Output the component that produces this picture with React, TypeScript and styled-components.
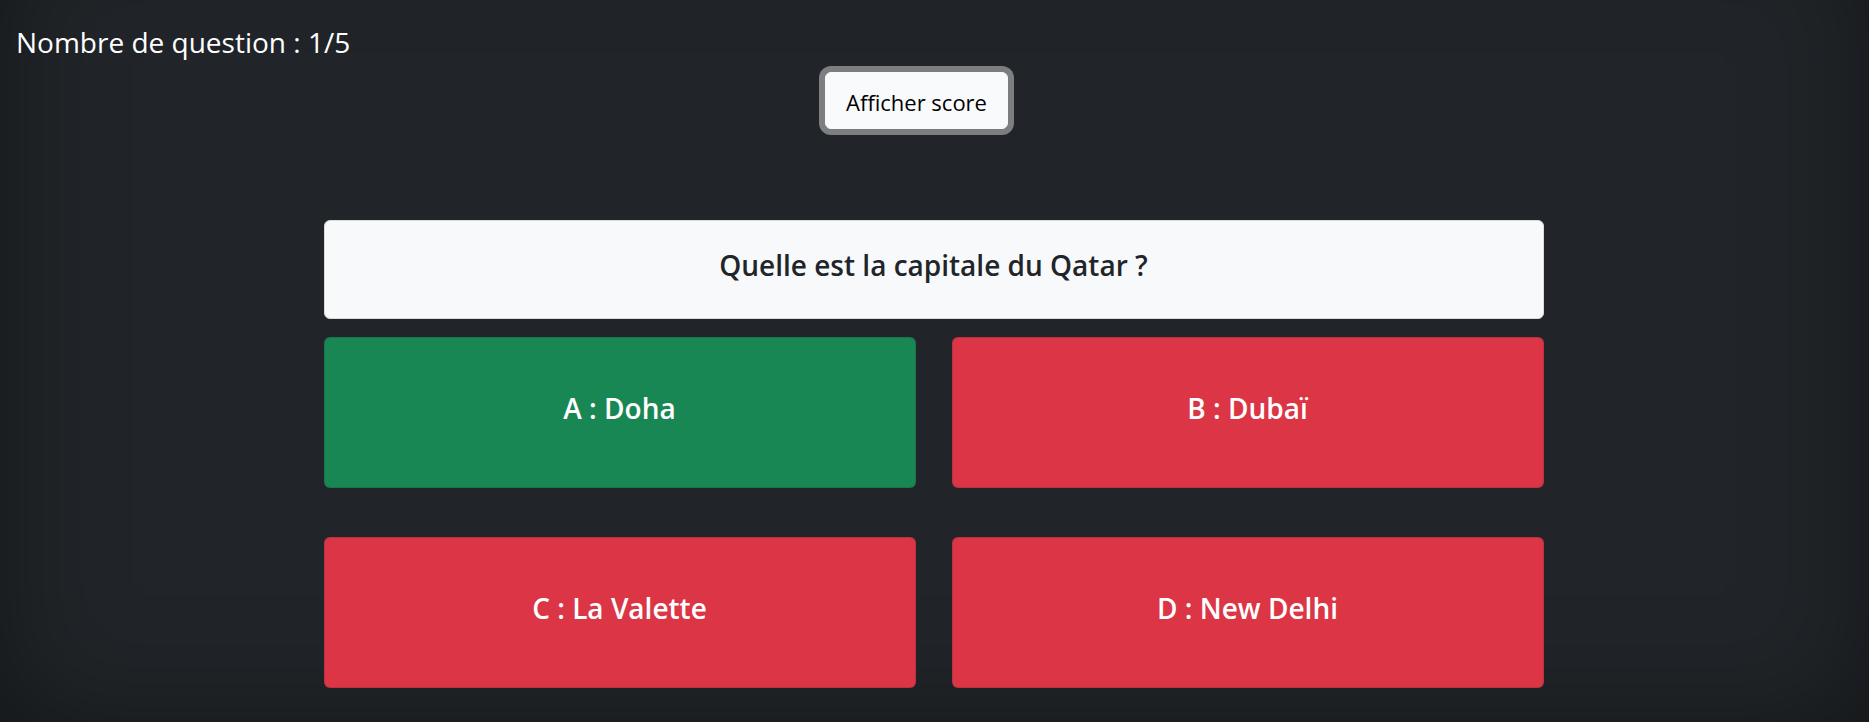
import React from "react";
import styled, { createGlobalStyle } from "styled-components";

const GlobalStyle = createGlobalStyle`
  *, *::before, *::after { box-sizing: border-box; }
  body {
    margin: 0;
    background: #212529;
    color: #fff;
    font-family: "Segoe UI", "Open Sans", "Noto Sans", sans-serif;
    font-size: 24px;
  }
`;

const Page = styled.div`
  position: relative;
  isolation: isolate;
  display: flex;
  flex-direction: column;
  min-height: 100vh;
  padding: 24px 18px 34px 16px;
  overflow: hidden;

  &::before {
    content: "";
    position: absolute;
    inset: -80px 0 -5px;
    box-shadow: inset 0 0 120px rgba(0, 0, 0, 0.4);
    pointer-events: none;
    z-index: -1;
  }
`;

const Counter = styled.p`
  margin: 0;
  font-size: 28px;
  line-height: 36px;
`;

const Toolbar = styled.div`
  display: flex;
  justify-content: center;
  margin-top: 12px;
  padding-right: 34px;
`;

const ScoreButton = styled.button`
  padding: 12px 20px 8px;
  border: 1px solid #f8f9fa;
  border-radius: 6px;
  background: #f9fafc;
  color: #000;
  font: inherit;
  font-size: 22px;
  line-height: 35px;
  box-shadow: 0 0 0 6px #7d7e80;
  outline: none;
  cursor: pointer;
`;

const Quiz = styled.main`
  width: 100%;
  max-width: 1220px;
  margin: 91px auto 0;
`;

const Question = styled.h1`
  margin: 0 0 18px;
  padding: 26px 24px 35px;
  border: 1px solid #d8dadc;
  border-radius: 6px;
  background: #f8f9fb;
  color: #212529;
  font-size: 28px;
  font-weight: 600;
  line-height: 36px;
  text-align: center;
`;

const Answers = styled.div`
  display: grid;
  grid-template-columns: 1fr 1fr;
  gap: 49px 36px;
`;

const Answer = styled.button<{ $correct: boolean }>`
  padding: 52px 24px 61px;
  border: 1px solid rgba(33, 37, 41, 0.18);
  border-radius: 6px;
  background: ${({ $correct }) => ($correct ? "#198754" : "#dc3545")};
  color: #fff;
  font: inherit;
  font-size: 28px;
  font-weight: 600;
  line-height: 36px;
  text-align: center;
  cursor: pointer;
`;

const choices = [
  { letter: "A", text: "Doha", correct: true },
  { letter: "B", text: "Dubaï", correct: false },
  { letter: "C", text: "La Valette", correct: false },
  { letter: "D", text: "New Delhi", correct: false },
];

export default function App() {
  return (
    <Page>
      <GlobalStyle />
      <Counter>Nombre de question : 1/5</Counter>
      <Toolbar>
        <ScoreButton type="button">Afficher score</ScoreButton>
      </Toolbar>
      <Quiz>
        <Question>Quelle est la capitale du Qatar ?</Question>
        <Answers>
          {choices.map(({ letter, text, correct }) => (
            <Answer key={letter} type="button" $correct={correct}>
              {`${letter} : ${text}`}
            </Answer>
          ))}
        </Answers>
      </Quiz>
    </Page>
  );
}
